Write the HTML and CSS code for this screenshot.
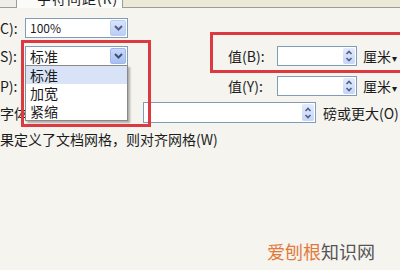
FILE: index.html
```html
<!DOCTYPE html>
<html lang="zh-CN">
<head>
<meta charset="utf-8">
<title>字符间距</title>
<link rel="stylesheet" href="styles.css">
</head>
<body>
<div class="page">
  <div class="tabs">
    <div class="tab-left"></div>
    <div class="tab-active"><span>字符间距(R)</span></div>
    <div class="tab-rest"></div>
  </div>

  <div class="form">
    <div class="row r1">
      <div class="lbl">C):</div>
      <div class="combo">
        <span class="val small">100%</span>
        <span class="btn"><svg width="9" height="6" viewBox="0 0 9 6"><path d="M1 1L4.5 4.5L8 1" fill="none" stroke="#4d6185" stroke-width="2"/></svg></span>
      </div>
    </div>

    <div class="row r2">
      <div class="lbl">S):</div>
      <div class="combo">
        <span class="val">标准</span>
        <span class="btn active"><svg width="9" height="6" viewBox="0 0 9 6"><path d="M1 1L4.5 4.5L8 1" fill="none" stroke="#3d5178" stroke-width="2"/></svg></span>
      </div>
      <div class="group">
        <div class="vlabel">值(B):</div>
        <div class="num">
          <span class="spin"><svg width="8" height="14" viewBox="0 0 8 14"><path d="M1.5 5L4 2.5L6.5 5M1.5 9L4 11.5L6.5 9" fill="none" stroke="#4d6185" stroke-width="1.6"/></svg></span>
        </div>
        <div class="unit">厘米<span class="caret">▾</span></div>
      </div>
    </div>

    <div class="row r3">
      <div class="lbl">P):</div>
      <div class="combo">
        <span class="val"></span>
        <span class="btn"></span>
      </div>
      <div class="group">
        <div class="vlabel">值(Y):</div>
        <div class="num">
          <span class="spin"><svg width="8" height="14" viewBox="0 0 8 14"><path d="M1.5 5L4 2.5L6.5 5M1.5 9L4 11.5L6.5 9" fill="none" stroke="#4d6185" stroke-width="1.6"/></svg></span>
        </div>
        <div class="unit">厘米<span class="caret">▾</span></div>
      </div>
    </div>

    <div class="row r4">
      <div class="lbl wide-lbl">字体</div>
      <div class="num wide">
        <span class="spin"><svg width="8" height="14" viewBox="0 0 8 14"><path d="M1.5 5L4 2.5L6.5 5M1.5 9L4 11.5L6.5 9" fill="none" stroke="#4d6185" stroke-width="1.6"/></svg></span>
      </div>
      <div class="unit2">磅或更大(O)</div>
    </div>

    <div class="row r5">
      <div class="note">果定义了文档网格，则对齐网格(W)</div>
    </div>
  </div>

  <ul class="dropdown">
    <li class="sel">标准</li>
    <li>加宽</li>
    <li>紧缩</li>
  </ul>

  <div class="mark mark1"></div>
  <div class="mark mark2"></div>

  <div class="watermark"><span class="wm-a">爱刨根</span><span class="wm-b">知识网</span></div>
</div>
</body>
</html>
```

FILE: styles.css
```css
html, body {
  margin: 0;
  padding: 0;
}
body {
  width: 400px;
  height: 270px;
  overflow: hidden;
  background: #f5f4ef;
  font-family: "Noto Sans CJK SC", "Noto Sans", sans-serif;
  font-size: 14px;
  color: #1c1c1c;
}
.page {
  position: relative;
  width: 400px;
  height: 270px;
  overflow: hidden;
}

/* tab strip */
.tabs {
  display: flex;
  height: 8px;
}
.tab-left {
  width: 16px;
  height: 7px;
  background: #efeee8;
  border-right: 1px solid #9c9c9c;
  border-bottom: 1px solid #9c9c9c;
}
.tab-active {
  width: 105px;
  height: 8px;
  overflow: hidden;
  background: #fbfbf9;
}
.tab-active span {
  display: block;
  margin-top: -10px;
  margin-left: 20px;
  line-height: 16px;
  white-space: nowrap;
  letter-spacing: 1px;
}
.tab-rest {
  flex: 1;
  height: 7px;
  background: #ece9d6;
  border-left: 1px solid #9c9c9c;
  border-bottom: 1px solid #9c9c9c;
}

/* form rows */
.row {
  display: flex;
  align-items: center;
}
.r1 { margin-top: 9px; height: 21px; }
.r2 { margin-top: 8px; height: 20px; }
.r3 { margin-top: 9px; height: 21px; }
.r4 { margin-top: 6px; height: 21px; }
.r5 { margin-top: 8px; height: 17px; }

.lbl {
  width: 25px;
  flex: none;
  white-space: nowrap;
  line-height: 16px;
}
.wide-lbl { width: 143px; }

.combo {
  width: 103px;
  height: 20px;
  flex: none;
  box-sizing: border-box;
  border: 1px solid #7f9db9;
  background: #fff;
  display: flex;
  align-items: center;
}
.combo .val {
  flex: 1;
  padding-left: 4px;
  line-height: 16px;
}
.combo .val.small {
  font-size: 12px;
}
.combo .btn {
  width: 16px;
  height: 16px;
  margin-right: 1px;
  border-radius: 2px;
  background: linear-gradient(#d9e4fc, #b9cdf7);
  border: 1px solid #bccdf2;
  box-sizing: border-box;
  display: flex;
  align-items: center;
  justify-content: center;
}
.combo .btn.active {
  background: linear-gradient(#c9d8fb, #a6bff3);
  border-color: #9fb7ea;
}

.group {
  display: flex;
  align-items: center;
  margin-left: 100px;
}
.vlabel {
  width: 49px;
  white-space: nowrap;
}
.num {
  width: 80px;
  height: 20px;
  flex: none;
  box-sizing: border-box;
  border: 1px solid #7f9db9;
  background: #fff;
  display: flex;
  justify-content: flex-end;
  align-items: stretch;
}
.num.wide {
  width: 173px;
  height: 21px;
}
.spin {
  width: 12px;
  margin: 1px;
  border-radius: 2px;
  background: linear-gradient(#e3ebfc, #c6d5f8);
  display: flex;
  align-items: center;
  justify-content: center;
}
.unit {
  margin-left: 6px;
  white-space: nowrap;
}
.caret {
  font-size: 10px;
  margin-left: 1px;
}
.unit2 {
  margin-left: 7px;
  white-space: nowrap;
}
.note {
  white-space: nowrap;
  line-height: 17px;
}

/* dropdown list (overlay) */
.dropdown {
  position: absolute;
  left: 25px;
  top: 65px;
  width: 103px;
  margin: 0;
  padding: 0;
  list-style: none;
  background: #fff;
  border: 1px solid #8a8a8a;
  box-sizing: border-box;
  box-shadow: 2px 2px 2px rgba(0, 0, 0, 0.3);
}
.dropdown li {
  height: 18px;
  line-height: 18px;
  padding-left: 4px;
}
.dropdown li.sel {
  background: #d8e3f7;
}

/* red annotation boxes */
.mark {
  position: absolute;
  box-sizing: border-box;
  border: 3px solid #dc3a40;
}
.mark1 {
  left: 21px;
  top: 40px;
  width: 130px;
  height: 87px;
}
.mark2 {
  left: 210px;
  top: 32px;
  width: 200px;
  height: 41px;
}

/* watermark */
.watermark {
  position: absolute;
  left: 267px;
  top: 239px;
  font-size: 18px;
  line-height: 24px;
  white-space: nowrap;
}
.wm-a { color: #e27a3c; }
.wm-b { color: #555; }
```
